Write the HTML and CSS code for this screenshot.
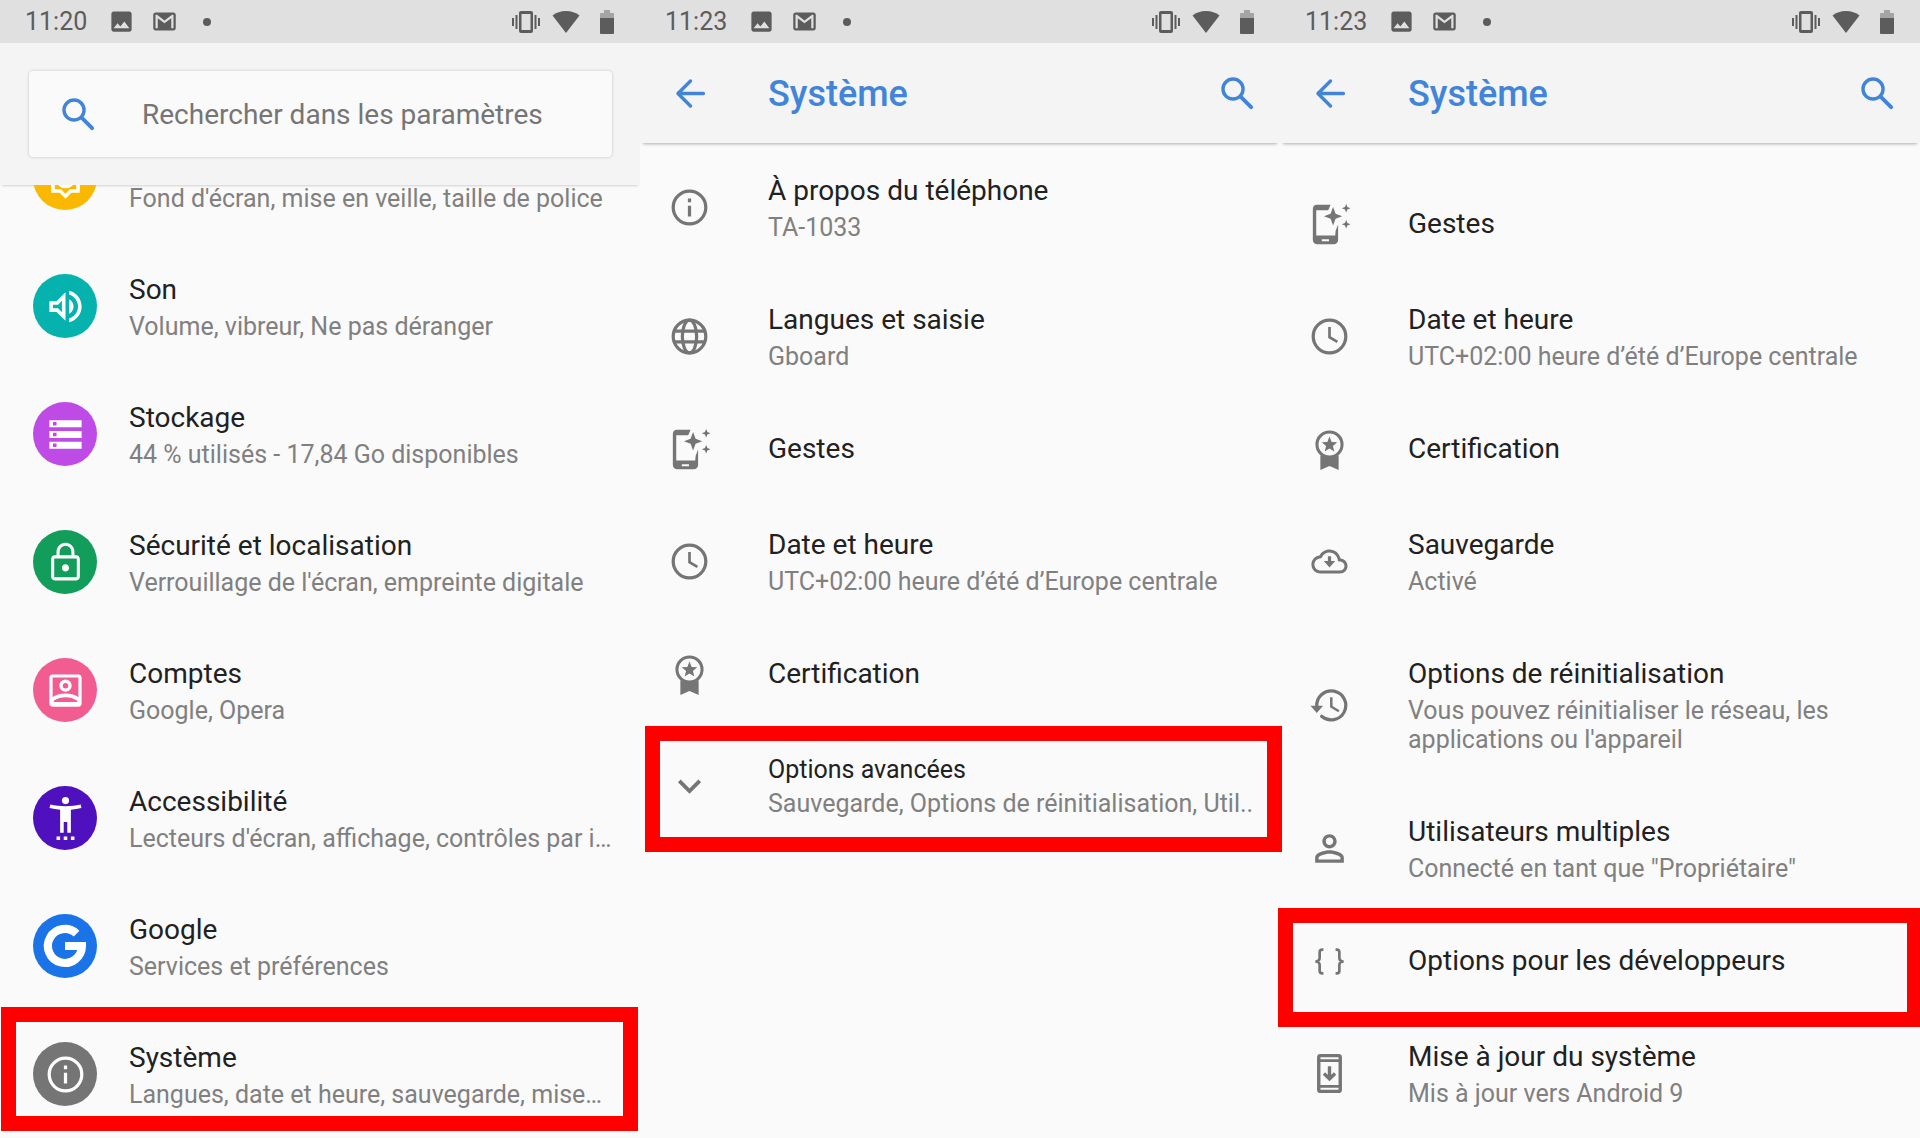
FILE: index.html
```html
<!DOCTYPE html>
<html lang="fr">
<head>
<meta charset="utf-8">
<meta name="viewport" content="width=device-width, initial-scale=1">
<title>Paramètres</title>
<link rel="stylesheet" href="styles.css">
</head>
<body>
<svg class="sprite" aria-hidden="true">
  <symbol id="i-search" viewBox="0 0 24 24"><circle cx="9.5" cy="9.5" r="5.6" fill="none" stroke="currentColor" stroke-width="1.9"/><path d="M14 14l5.6 5.6" fill="none" stroke="currentColor" stroke-width="2.2" stroke-linecap="round"/></symbol>
  <symbol id="i-back" viewBox="0 0 24 24"><path d="M19.2 12H5.2M12 5l-7 7 7 7" fill="none" stroke="currentColor" stroke-width="1.9" stroke-linecap="round" stroke-linejoin="round"/></symbol>
  <symbol id="i-info" viewBox="0 0 24 24"><circle cx="12" cy="12" r="9.1" fill="none" stroke="currentColor" stroke-width="1.8"/><path d="M11.1 11h1.8v6h-1.8zM11.1 7h1.8v2h-1.8z"/></symbol>
  <symbol id="i-globe" viewBox="0 0 24 24"><g fill="none" stroke="currentColor" stroke-width="1.8"><circle cx="12" cy="12" r="9.1"/><ellipse cx="12" cy="12" rx="4" ry="9.1"/><path d="M3.8 9h16.4M3.8 15h16.4"/></g></symbol>
  <symbol id="i-gesture" viewBox="0 0 24 24"><path fill-rule="evenodd" d="M5 1h7.6l-1.3 3H4.6v14.2h10.6L15.400 15.600l1.400-3.600V20.600A2.400 2.400 0 0 1 14.400 23H5.100A2.400 2.400 0 0 1 2.700 20.600V3.400A2.400 2.400 0 0 1 5 1zM7.700 20.200v1.100h4v-1.100z"/><path d="M14 2.300l1.400 3.700 3.700 1.400-3.700 1.400L14 12.500l-1.400-3.700-3.700-1.400L12.600 6zM21.300.5l.7 1.700 1.700.7-1.700.7-.7 1.700-.7-1.700-1.700-.7 1.700-.7zM21.300 9.500l.7 1.700 1.700.7-1.700.7-.7 1.700-.7-1.700-1.700-.7 1.700-.7z"/></symbol>
  <symbol id="i-clock" viewBox="0 0 24 24"><circle cx="12" cy="12" r="9.100" fill="none" stroke="currentColor" stroke-width="1.800"/><path d="M12 6.700v5.700l4.400 2.600" fill="none" stroke="currentColor" stroke-width="1.500"/></symbol>
  <symbol id="i-award" viewBox="0 0 24 24"><circle cx="12" cy="9.200" r="7" fill="none" stroke="currentColor" stroke-width="1.700"/><path d="M6.900 15.200q5.100 3.200 10.200 0v8.300L12 21.200l-5.100 2.300zM12 4.800l1.200 3 3.100.2-2.400 2 .8 3.100-2.700-1.700-2.700 1.700.8-3.100-2.400-2 3.100-.2z"/></symbol>
  <symbol id="i-chevron" viewBox="0 0 24 24"><path d="M6.300 8.900L12 14.600l5.700-5.700" fill="none" stroke="currentColor" stroke-width="2.100"/></symbol>
  <symbol id="i-cloud" viewBox="0 0 24 24"><path transform="translate(1.900 1.900) scale(.84)" d="M19.350 10.040C18.670 6.590 15.640 4 12 4 9.110 4 6.600 5.640 5.350 8.040 2.340 8.360 0 10.910 0 14c0 3.310 2.690 6 6 6h13c2.760 0 5-2.240 5-5 0-2.640-2.050-4.780-4.650-4.960zM19 18H6c-2.210 0-4-1.790-4-4 0-2.050 1.530-3.760 3.560-3.970l1.070-.11.5-.95C8.080 7.140 9.940 6 12 6c2.620 0 4.880 1.860 5.390 4.430l.3 1.500 1.530.11c1.560.1 2.780 1.410 2.780 2.960 0 1.650-1.350 3-3 3z"/><path d="M11.100 9h1.800v2.700h2.300L12 15.300l-3.200-3.600h2.300z"/></symbol>
  <symbol id="i-history" viewBox="0 0 24 24"><path d="M4.900 12.500A8.100 8.100 0 1 1 7.600 18" fill="none" stroke="currentColor" stroke-width="1.800" stroke-linecap="round"/><path d="M1.400 12.200h7L4.900 16.200zM12.300 7.400h1.400v4.900l3.900 2.300-.7 1.200-4.600-2.800z"/></symbol>
  <symbol id="i-person" viewBox="0 0 24 24"><path d="M12 5.900c1.160 0 2.100.94 2.100 2.100s-.94 2.100-2.100 2.100S9.900 9.160 9.900 8s.94-2.100 2.100-2.100m0 9c2.970 0 6.100 1.460 6.100 2.100v1.100H5.900V17c0-.64 3.130-2.100 6.100-2.100M12 4C9.790 4 8 5.790 8 8s1.790 4 4 4 4-1.790 4-4-1.790-4-4-4zm0 9c-2.670 0-8 1.340-8 4v3h16v-3c0-2.660-5.330-4-8-4z"/></symbol>
  <symbol id="i-braces" viewBox="0 0 24 24"><path d="M8.600 5.400H8c-1.100 0-1.500.5-1.500 1.500v3c0 1.300-.8 2.100-2.400 2.100 1.600 0 2.400.8 2.400 2.100v3c0 1 .4 1.500 1.500 1.500h.6M15.400 5.400h.6c1.100 0 1.500.5 1.500 1.500v3c0 1.300.8 2.100 2.400 2.100-1.600 0-2.400.8-2.400 2.100v3c0 1-.4 1.500-1.500 1.500h-.6" fill="none" stroke="currentColor" stroke-width="1.500"/></symbol>
  <symbol id="i-update" viewBox="0 0 24 24"><rect x="6" y="2" width="12" height="20" rx="1" fill="none" stroke="currentColor" stroke-width="1.900"/><path d="M6 4.800h12M6 19.200h12" stroke="currentColor" stroke-width="1.500"/><path d="M12 7.900v6.500M8.900 12l3.100 3 3.100-3" fill="none" stroke="currentColor" stroke-width="1.900"/></symbol>
  <symbol id="i-display" viewBox="0 0 24 24"><path d="M20 8.690V4h-4.690L12 .69 8.690 4H4v4.690L.69 12 4 15.310V20h4.690L12 23.310 15.310 20H20v-4.690L23.310 12zm-2 5.790V18h-3.520L12 20.480 9.520 18H6v-3.520L3.520 12 6 9.520V6h3.520L12 3.520 14.480 6H18v3.520L20.480 12zM12 6.500a5.500 5.500 0 1 0 0 11 5.500 5.500 0 0 0 0-11z"/></symbol>
  <symbol id="i-volume" viewBox="0 0 24 24"><path d="M3 9v6h4l5 5V4L7 9H3zm7-.17v6.340L7.830 13H5v-2h2.830L10 8.830zM16.500 12c0-1.770-1.020-3.290-2.500-4.030v8.050c1.480-.73 2.500-2.250 2.500-4.020zM14 3.230v2.060c2.890.86 5 3.540 5 6.710s-2.110 5.850-5 6.710v2.060c4.010-.91 7-4.490 7-8.770s-2.990-7.860-7-8.770z"/></symbol>
  <symbol id="i-storage" viewBox="0 0 24 24"><path fill-rule="evenodd" d="M3 4h18v4H3zM5 5v2h2V5zM3 10h18v4H3zM5 11v2h2v-2zM3 16h18v4H3zM5 17v2h2v-2z"/></symbol>
  <symbol id="i-lock" viewBox="0 0 24 24"><path d="M18 8h-1V6c0-2.760-2.240-5-5-5S7 3.240 7 6v2H6c-1.100 0-2 .9-2 2v10c0 1.100.9 2 2 2h12c1.100 0 2-.9 2-2V10c0-1.100-.9-2-2-2zM8.700 6a3.300 3.300 0 0 1 6.600 0v2H8.700V6zm9.600 14.300H5.700V9.700h12.600zM12 17c1.100 0 2-.9 2-2s-.9-2-2-2-2 .9-2 2 .9 2 2 2z"/></symbol>
  <symbol id="i-account" viewBox="0 0 24 24"><rect x="3.900" y="3.900" width="16.200" height="16.200" rx="1" fill="none" stroke="currentColor" stroke-width="1.800"/><circle cx="12" cy="9.300" r="2.500" fill="none" stroke="currentColor" stroke-width="1.900"/><path fill-rule="evenodd" d="M4 16.200c4.500-3.300 11.500-3.300 16 0V20H4zM5.400 17.700v.7h13.200v-.7c-4-2.500-9.200-2.500-13.200 0z"/></symbol>
  <symbol id="i-access" viewBox="0 0 24 24"><circle cx="12" cy="2" r="2"/><path d="M20.500 4.200c-5.500 1.200-11.500 1.200-17 0L3.100 6.100c1.900.5 3.900.8 5.900 1V20h2v-6h2v6h2V7.100c2-.2 4-.5 5.900-1zM7 22h2v2H7zM11 22h2v2h-2zM15 22h2v2h-2z"/></symbol>
  <symbol id="i-google" viewBox="0 0 64 64"><path d="M43.600 19.600A17 17 0 1 0 48.900 32H32" fill="none" stroke="currentColor" stroke-width="8.200"/></symbol>
  <symbol id="i-image" viewBox="0 0 24 24"><path d="M21 19V5c0-1.100-.9-2-2-2H5c-1.100 0-2 .9-2 2v14c0 1.100.9 2 2 2h14c1.100 0 2-.9 2-2zM8.500 13.500l2.500 3.010L14.500 12l4.500 6H5z"/></symbol>
  <symbol id="i-mail" viewBox="0 0 24 24"><path fill-rule="evenodd" d="M20 4H4c-1.100 0-2 .9-2 2v12c0 1.100.9 2 2 2h16c1.100 0 2-.9 2-2V6c0-1.100-.9-2-2-2zm0 14h-2V9.200l-6 4.300-6-4.300V18H4V6h1.300L12 11l6.700-5H20z"/></symbol>
  <symbol id="i-vibrate" viewBox="0 0 28 22"><path fill-rule="evenodd" d="M9 0h10a2 2 0 0 1 2 2v18a2 2 0 0 1-2 2H9a2 2 0 0 1-2-2V2a2 2 0 0 1 2-2zM9.500 3v16h9V3zM3.500 4h2v14h-2zM0 7h2v8H0zM22.500 4h2v14h-2zM26 7h2v8h-2z"/></symbol>
  <symbol id="i-wifi" viewBox="0 0 28 22"><path d="M14 22L.5 4.500C4 1.600 9 0 14 0s10 1.600 13.500 4.500z"/></symbol>
  <symbol id="i-battery" viewBox="0 0 14 24"><path d="M4 0h6v3h3a1 1 0 0 1 1 1v4H0V4a1 1 0 0 1 1-1h3z" opacity=".45"/><path d="M0 8h14v15a1 1 0 0 1-1 1H1a1 1 0 0 1-1-1z"/></symbol>
</svg>

<main class="screens">
  <section class="screen">
    <div class="status">
      <span>11:20</span>
      <svg class="s-image"><use href="#i-image"/></svg>
      <svg class="s-mail"><use href="#i-mail"/></svg>
      <span class="dot"></span>
      <svg class="s-vibrate"><use href="#i-vibrate"/></svg>
      <svg class="s-wifi"><use href="#i-wifi"/></svg>
      <svg class="s-battery"><use href="#i-battery"/></svg>
    </div>
    <header class="search-header">
      <label class="search-box">
        <svg class="icon"><use href="#i-search"/></svg>
        <input type="search" placeholder="Rechercher dans les paramètres" aria-label="Rechercher dans les paramètres">
      </label>
    </header>
    <nav class="list list-home">
      <a class="item partial" href="#affichage"><span class="badge yellow"><svg class="icon"><use href="#i-display"/></svg></span><span class="text"><span class="summary">Fond d'écran, mise en veille, taille de police</span></span></a>
      <a class="item" href="#son"><span class="badge teal"><svg class="icon"><use href="#i-volume"/></svg></span><span class="text"><span class="title">Son</span><span class="summary">Volume, vibreur, Ne pas déranger</span></span></a>
      <a class="item" href="#stockage"><span class="badge purple"><svg class="icon"><use href="#i-storage"/></svg></span><span class="text"><span class="title">Stockage</span><span class="summary">44 % utilisés - 17,84 Go disponibles</span></span></a>
      <a class="item" href="#securite"><span class="badge green"><svg class="icon"><use href="#i-lock"/></svg></span><span class="text"><span class="title">Sécurité et localisation</span><span class="summary">Verrouillage de l'écran, empreinte digitale</span></span></a>
      <a class="item" href="#comptes"><span class="badge pink"><svg class="icon"><use href="#i-account"/></svg></span><span class="text"><span class="title">Comptes</span><span class="summary">Google, Opera</span></span></a>
      <a class="item" href="#accessibilite"><span class="badge indigo"><svg class="icon"><use href="#i-access"/></svg></span><span class="text"><span class="title">Accessibilité</span><span class="summary">Lecteurs d'écran, affichage, contrôles par i…</span></span></a>
      <a class="item" href="#google"><span class="badge blue"><svg class="icon-full"><use href="#i-google"/></svg></span><span class="text"><span class="title">Google</span><span class="summary">Services et préférences</span></span></a>
      <a class="item marked mark-home" href="#systeme"><span class="badge gray"><svg class="icon"><use href="#i-info"/></svg></span><span class="text"><span class="title">Système</span><span class="summary">Langues, date et heure, sauvegarde, mise…</span></span></a>
    </nav>
  </section>

  <section class="screen">
    <div class="status">
      <span>11:23</span>
      <svg class="s-image"><use href="#i-image"/></svg>
      <svg class="s-mail"><use href="#i-mail"/></svg>
      <span class="dot"></span>
      <svg class="s-vibrate"><use href="#i-vibrate"/></svg>
      <svg class="s-wifi"><use href="#i-wifi"/></svg>
      <svg class="s-battery"><use href="#i-battery"/></svg>
    </div>
    <header class="toolbar">
      <button type="button" aria-label="Retour"><svg class="icon"><use href="#i-back"/></svg></button>
      <h1>Système</h1>
      <button type="button" aria-label="Rechercher"><svg class="icon"><use href="#i-search"/></svg></button>
    </header>
    <nav class="list">
      <a class="item" href="#a-propos"><svg class="icon"><use href="#i-info"/></svg><span class="text"><span class="title">À propos du téléphone</span><span class="summary">TA-1033</span></span></a>
      <a class="item" href="#langues"><svg class="icon"><use href="#i-globe"/></svg><span class="text"><span class="title">Langues et saisie</span><span class="summary">Gboard</span></span></a>
      <a class="item" href="#gestes"><svg class="icon"><use href="#i-gesture"/></svg><span class="text"><span class="title">Gestes</span></span></a>
      <a class="item" href="#date"><svg class="icon"><use href="#i-clock"/></svg><span class="text"><span class="title">Date et heure</span><span class="summary">UTC+02:00 heure d’été d’Europe centrale</span></span></a>
      <a class="item" href="#certification"><svg class="icon"><use href="#i-award"/></svg><span class="text"><span class="title">Certification</span></span></a>
      <button type="button" class="item advanced marked mark-advanced"><svg class="icon"><use href="#i-chevron"/></svg><span class="text"><span class="title">Options avancées</span><span class="summary">Sauvegarde, Options de réinitialisation, Util..</span></span></button>
    </nav>
  </section>

  <section class="screen">
    <div class="status">
      <span>11:23</span>
      <svg class="s-image"><use href="#i-image"/></svg>
      <svg class="s-mail"><use href="#i-mail"/></svg>
      <span class="dot"></span>
      <svg class="s-vibrate"><use href="#i-vibrate"/></svg>
      <svg class="s-wifi"><use href="#i-wifi"/></svg>
      <svg class="s-battery"><use href="#i-battery"/></svg>
    </div>
    <header class="toolbar">
      <button type="button" aria-label="Retour"><svg class="icon"><use href="#i-back"/></svg></button>
      <h1>Système</h1>
      <button type="button" aria-label="Rechercher"><svg class="icon"><use href="#i-search"/></svg></button>
    </header>
    <nav class="list list-expanded">
      <a class="item" href="#gestes"><svg class="icon"><use href="#i-gesture"/></svg><span class="text"><span class="title">Gestes</span></span></a>
      <a class="item" href="#date"><svg class="icon"><use href="#i-clock"/></svg><span class="text"><span class="title">Date et heure</span><span class="summary">UTC+02:00 heure d’été d’Europe centrale</span></span></a>
      <a class="item" href="#certification"><svg class="icon"><use href="#i-award"/></svg><span class="text"><span class="title">Certification</span></span></a>
      <a class="item" href="#sauvegarde"><svg class="icon"><use href="#i-cloud"/></svg><span class="text"><span class="title">Sauvegarde</span><span class="summary">Activé</span></span></a>
      <a class="item" href="#reinitialisation"><svg class="icon"><use href="#i-history"/></svg><span class="text"><span class="title">Options de réinitialisation</span><span class="summary">Vous pouvez réinitialiser le réseau, les<br>applications ou l'appareil</span></span></a>
      <a class="item" href="#utilisateurs"><svg class="icon"><use href="#i-person"/></svg><span class="text"><span class="title">Utilisateurs multiples</span><span class="summary">Connecté en tant que "Propriétaire"</span></span></a>
      <a class="item marked mark-dev" href="#developpeurs"><svg class="icon"><use href="#i-braces"/></svg><span class="text"><span class="title">Options pour les développeurs</span></span></a>
      <a class="item" href="#mise-a-jour"><svg class="icon"><use href="#i-update"/></svg><span class="text"><span class="title">Mise à jour du système</span><span class="summary">Mis à jour vers Android 9</span></span></a>
    </nav>
  </section>
</main>
</body>
</html>
```
FILE: styles.css
```css
* {
  box-sizing: border-box;
}

body {
  margin: 0;
  background: #fafafa;
  color: #212121;
  font-family: Roboto, "Liberation Sans", sans-serif;
  overflow-x: hidden;
}

button,
input {
  font: inherit;
  color: inherit;
  border: 0;
  background: none;
  padding: 0;
}

svg {
  display: block;
  flex: none;
  fill: currentColor;
}

.sprite {
  position: absolute;
  width: 0;
  height: 0;
}

.screens {
  display: grid;
  grid-template-columns: repeat(3, minmax(0, 1fr));
  min-height: 100vh;
}

.icon {
  width: 43px;
  height: 43px;
}

.icon-full {
  width: 64px;
  height: 64px;
}

/* Status bar */
.status {
  display: flex;
  align-items: center;
  height: 43px;
  padding: 0 26px 0 25px;
  background: #e0e0e0;
  color: #5c5c5c;
  font-size: 25px;
  line-height: 43px;
}

.s-image {
  width: 27px;
  height: 27px;
  margin-left: 21px;
}

.s-mail {
  width: 27px;
  height: 27px;
  margin-left: 16px;
}

.dot {
  width: 8px;
  height: 8px;
  margin-left: 25px;
  border-radius: 50%;
  background: currentColor;
}

.s-vibrate {
  width: 28px;
  height: 22px;
  margin-left: auto;
}

.s-wifi {
  width: 28px;
  height: 22px;
  margin-left: 12px;
}

.s-battery {
  width: 14px;
  height: 24px;
  margin-left: 20px;
}

/* Headers */
.search-header {
  padding: 28px 28px 28px 29px;
  background: #f4f4f4;
  box-shadow: 0 3px 2px -2px rgba(0, 0, 0, 0.16);
}

.search-box {
  display: flex;
  align-items: center;
  gap: 42px;
  height: 86px;
  padding: 0 28px;
  border-radius: 4px;
  background: #fafafa;
  box-shadow: 0 0 3px rgba(0, 0, 0, 0.22);
  color: #4285d8;
}

.search-box input {
  flex: 1;
  min-width: 0;
  height: 86px;
  font-size: 28px;
  outline: none;
}

.search-box input::placeholder {
  color: #757575;
  opacity: 1;
}

.toolbar {
  display: flex;
  align-items: center;
  height: 100px;
  padding: 0 21px 0 29px;
  background: #f4f4f4;
  box-shadow: 0 4px 3px -3px rgba(0, 0, 0, 0.3);
  color: #4285d8;
}

.toolbar h1 {
  flex: 1;
  margin: 0;
  padding: 2px 0 0 56px;
  font-size: 36px;
  font-weight: 500;
}

/* Lists */
.list {
  display: flex;
  flex-direction: column;
}

.list-expanded {
  padding-top: 33px;
}

.item {
  position: relative;
  display: flex;
  align-items: center;
  gap: 57px;
  padding: 30px 16px 30px 28px;
  color: #757575;
  text-align: left;
  text-decoration: none;
  white-space: nowrap;
}

/* Keeps the icon from making one-line rows taller than their text */
.item > .icon {
  margin: -4px 0;
}

.list-home .item {
  gap: 32px;
  min-height: 128px;
  padding: 29px 16px 29px 33px;
}

.list-home .partial {
  align-items: flex-end;
  height: 57px;
  min-height: 0;
  padding: 0 16px 32px 33px;
  overflow: hidden;
}

.text {
  display: flex;
  flex-direction: column;
  gap: 4px;
  min-width: 0;
}

.title {
  color: #212121;
  font-size: 28px;
  line-height: 36px;
}

.summary {
  color: #808080;
  font-size: 25px;
  line-height: 29px;
}

.partial .summary {
  margin-bottom: -3px;
}

.advanced {
  min-height: 129px;
}

.advanced .title {
  font-size: 25px;
  line-height: 30px;
}

/* Round category icons */
.badge {
  display: grid;
  flex: none;
  place-items: center;
  width: 64px;
  height: 64px;
  border-radius: 50%;
  color: #fff;
}

.yellow { background: #fbb800; }
.teal { background: #06b2ad; }
.purple { background: #bf4be6; }
.green { background: #129e5a; }
.pink { background: #f15d90; }
.indigo { background: #4f10bd; }
.blue { background: #1b73e8; }
.gray { background: #757575; }

/* Red frames drawn over the entries to follow */
.marked::after {
  content: "";
  position: absolute;
  z-index: 1;
  border: 15px solid #f00;
  pointer-events: none;
}

.mark-home::after {
  inset: -3px 2px 7px 1px;
}

.mark-advanced::after {
  inset: 4px -2px -1px 5px;
}

.mark-dev::after {
  inset: -5px 0 -18px -2px;
  border-right-width: 13px;
}
```
